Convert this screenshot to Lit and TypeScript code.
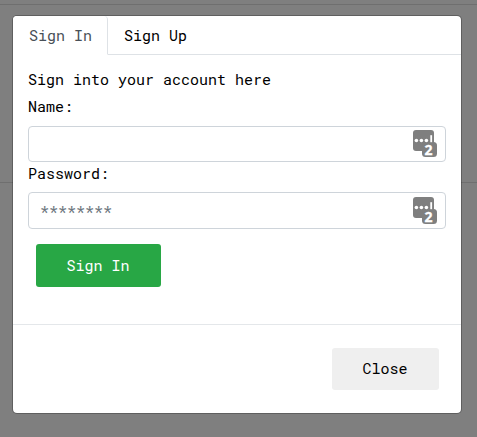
import { LitElement, html, css } from "lit";
import { customElement, property } from "lit/decorators.js";

@customElement("credential-field")
class CredentialField extends LitElement {
  @property() label = "";
  @property() hint = "";
  @property() kind = "text";

  static styles = css`
    :host { display: flex; flex-direction: column; height: 68px; }
    .label { flex: none; height: var(--label-height, 32px); line-height: var(--label-line, 24px); }
    .box {
      box-sizing: border-box; flex: 1; display: flex; align-items: center;
      border: 1px solid #ced4da; border-radius: 4px; padding: 0 8px 0 11px; background: #fff;
    }
    .input {
      flex: 1; min-width: 0; height: 24px; border: 0; outline: 0; padding: 0;
      font: inherit; background: transparent; color: #495057;
    }
    .input::placeholder { color: #6c757d; opacity: 1; }
    .key { display: block; flex: none; align-self: flex-start; margin-top: var(--key-top, 2px); }
    .count { font: 700 14px "Open Sans", sans-serif; fill: #fff; stroke: #fff; stroke-width: 0.3px; }
  `;

  render() {
    return html`
      <label class="label" for="field">${this.label}</label>
      <div class="box">
        <input class="input" id="field" type=${this.kind} placeholder=${this.hint} />
        <svg class="key" width="25" height="29" viewBox="0 0 25 29">
          <rect x="1" y="1" width="21" height="21" rx="3" fill="#7f7f7f" />
          <rect x="10" y="13" width="15" height="15" rx="3.5" fill="#7f7f7f" />
          <g fill="#fff">
            <circle cx="4.4" cy="11.5" r="1.8" />
            <circle cx="9.4" cy="11.5" r="1.8" />
            <circle cx="14.4" cy="11.5" r="1.8" />
            <rect x="18.3" y="6.2" width="1.8" height="7" />
          </g>
          <text class="count" x="12.4" y="25.8">2</text>
        </svg>
      </div>
    `;
  }
}

@customElement("app-root")
class AppRoot extends LitElement {
  static styles = css`
    :host {
      display: grid; grid-template-rows: 4px 1px 177px 1px 1fr; height: 437px;
      background: #7f7f7f; color: #000;
      font: 15px/24px "Roboto Mono", "DejaVu Sans Mono", monospace;
    }
    .rule { grid-column: 1; background: #6f6f6f; }
    .first { grid-row: 2; }
    .second { grid-row: 4; }
    .dialog {
      grid-column: 1; grid-row: 1 / -1; z-index: 1; box-sizing: border-box;
      width: 450px; height: 399px; margin: 15px 0 0 12px;
      display: flex; flex-direction: column;
      background: #fff; background-clip: padding-box;
      border: 1px solid rgba(0, 0, 0, 0.25); border-radius: 5px;
    }
    .tabs { display: flex; flex: none; height: 39px; box-sizing: border-box; border-bottom: 1px solid #dee2e6; }
    .tab {
      box-sizing: border-box; height: 39px; padding: 7px 16px 0;
      border: 1px solid transparent; border-left: 0; border-top: 0; line-height: 24px;
    }
    .active {
      color: #495057; background: #fff; border-color: #dee2e6; border-bottom-color: #fff;
      border-radius: 4px 4px 0 0; padding-right: 15px;
    }
    .body { flex: 1; padding: 12px 15px 0; }
    .intro { margin: 0 0 3px; height: 24px; }
    .button {
      display: block; border: 0; border-radius: 3px; font: inherit;
      color: #000; background: #efefef; width: 107px; height: 42px; padding: 0 1px 2px 0;
    }
    .submit { color: #fff; background: #28a745; width: 125px; height: 43px; margin: 15px 0 0 8px; }
    .next { height: 67px; --label-height: 30px; --label-line: 22px; --key-top: 3px; }
    .footer {
      box-sizing: border-box; height: 89px; border-top: 1px solid #e4e7ea;
      display: flex; justify-content: flex-end; padding: 23px 22px 0 0;
    }
  `;

  render() {
    return html`
      <div class="rule first"></div>
      <div class="rule second"></div>
      <section class="dialog" role="dialog">
        <nav class="tabs">
          <div class="tab active">Sign In</div>
          <div class="tab">Sign Up</div>
        </nav>
        <div class="body">
          <p class="intro">Sign into your account here</p>
          <credential-field label="Name:"></credential-field>
          <credential-field class="next" label="Password:" hint="********" kind="password"></credential-field>
          <button class="button submit">Sign In</button>
        </div>
        <footer class="footer"><button class="button">Close</button></footer>
      </section>
    `;
  }
}
